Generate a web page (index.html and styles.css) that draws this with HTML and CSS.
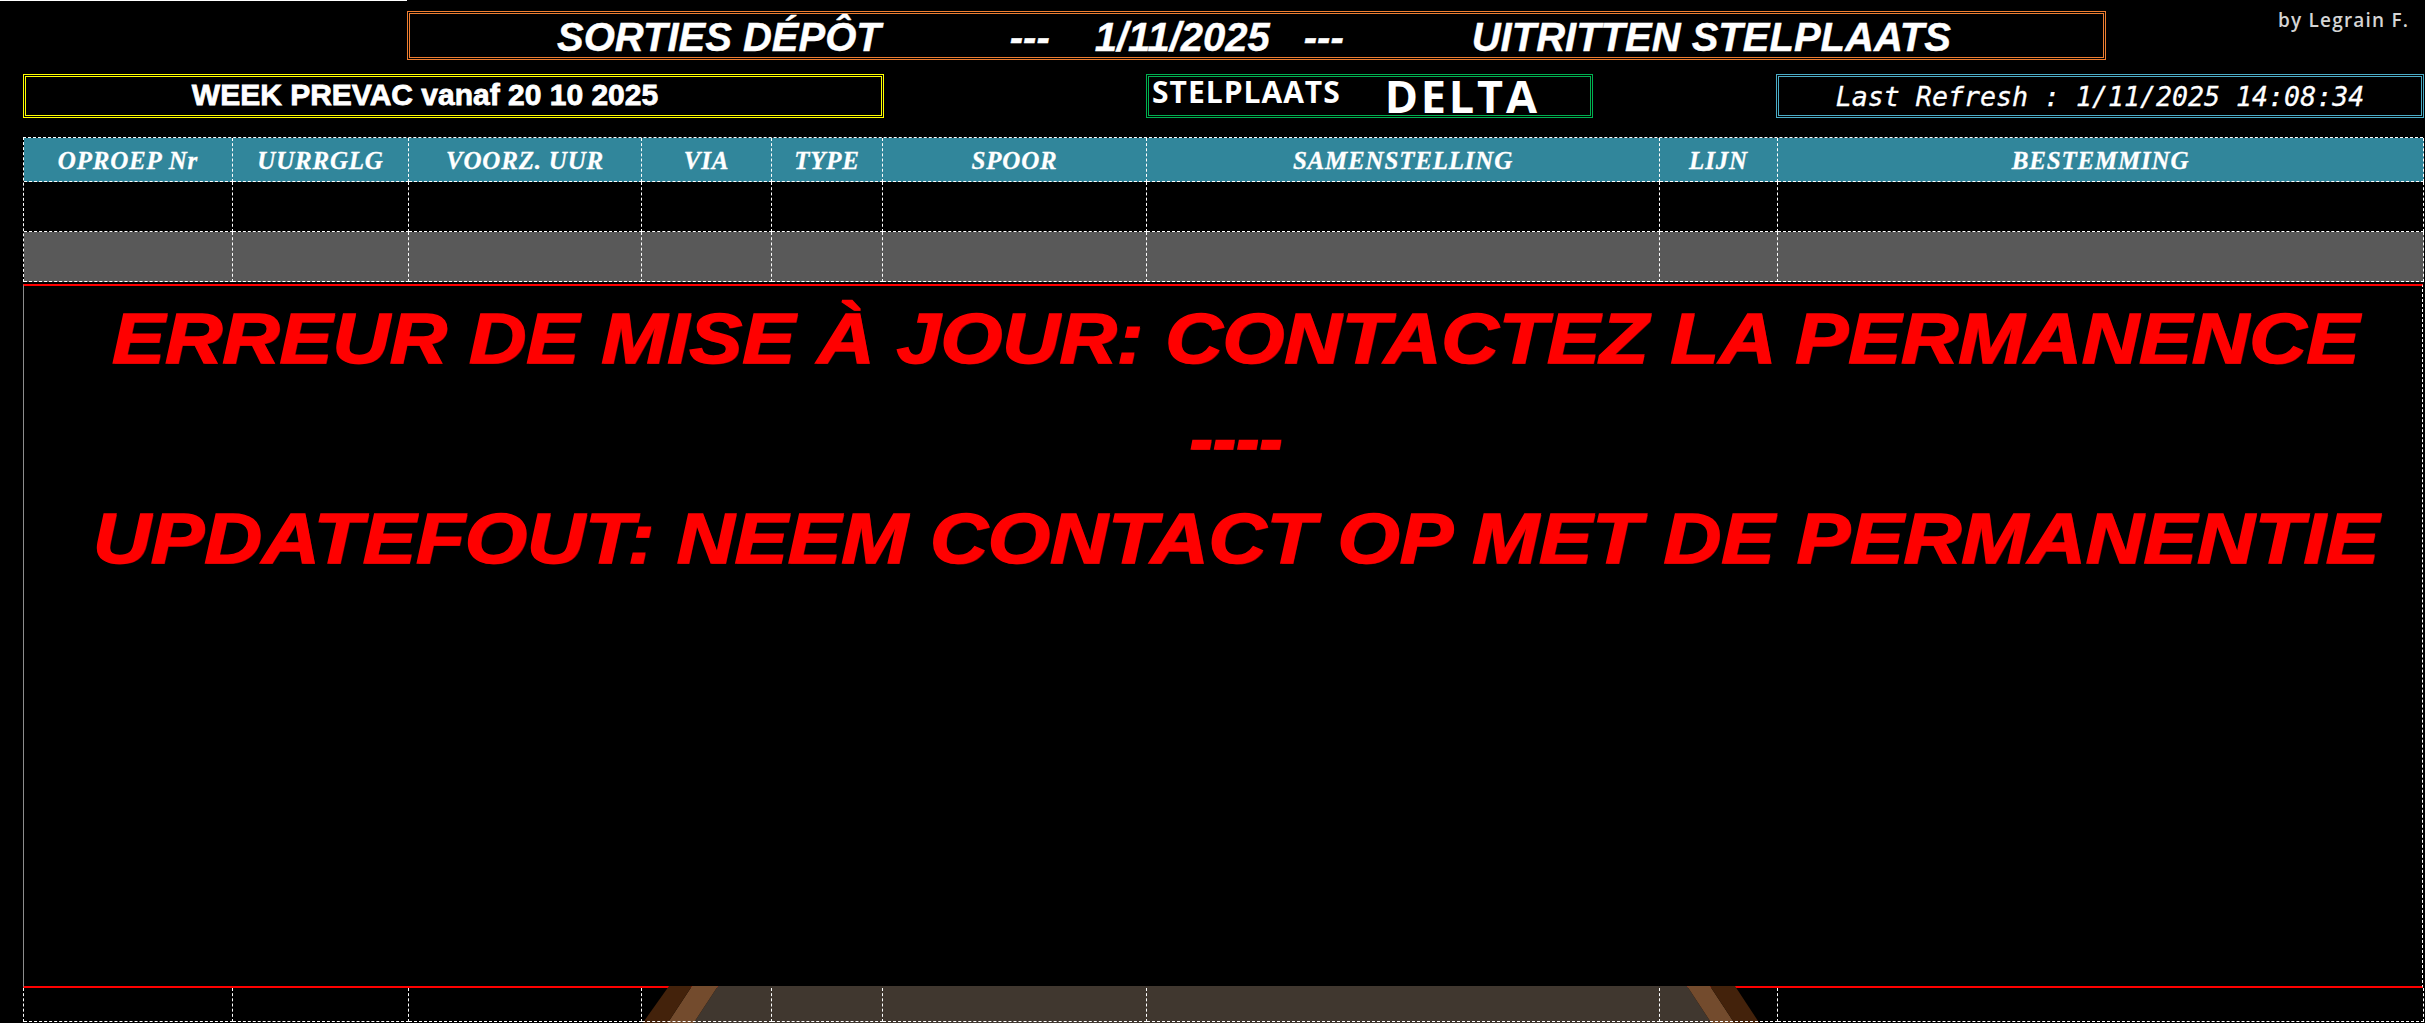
FILE: index.html
```html
<!DOCTYPE html>
<html lang="fr">
<head>
<meta charset="utf-8">
<title>Sorties dépôt</title>
<link rel="stylesheet" href="styles.css">
</head>
<body>
<div class="top">
  <div class="corner"></div>
  <div class="title">
    <span class="t1">SORTIES DÉPÔT</span>
    <span class="t2">---</span>
    <span class="t3">1/11/2025</span>
    <span class="t4">---</span>
    <span class="t5">UITRITTEN STELPLAATS</span>
  </div>
  <div class="credit">by Legrain F.</div>
</div>

<div class="infobar">
  <div class="week">WEEK PREVAC vanaf 20 10 2025</div>
  <div class="stel"><span class="stel-label">STELPLAATS</span><span class="stel-name">DELTA</span></div>
  <div class="refresh">Last Refresh : 1/11/2025 14:08:34</div>
</div>

<div class="sheet">
  <div class="grid">
    <div class="hd">OPROEP Nr</div>
    <div class="hd">UURRGLG</div>
    <div class="hd">VOORZ. UUR</div>
    <div class="hd">VIA</div>
    <div class="hd">TYPE</div>
    <div class="hd">SPOOR</div>
    <div class="hd">SAMENSTELLING</div>
    <div class="hd">LIJN</div>
    <div class="hd">BESTEMMING</div>

    <div class="c r1"></div><div class="c r1"></div><div class="c r1"></div><div class="c r1"></div><div class="c r1"></div><div class="c r1"></div><div class="c r1"></div><div class="c r1"></div><div class="c r1"></div>

    <div class="c r2"></div><div class="c r2"></div><div class="c r2"></div><div class="c r2"></div><div class="c r2"></div><div class="c r2"></div><div class="c r2"></div><div class="c r2"></div><div class="c r2"></div>
  </div>

  <div class="alert">
    <div class="line"><span class="fr">ERREUR DE MISE À JOUR: CONTACTEZ LA PERMANENCE</span></div>
    <div class="line"><span class="sep">----</span></div>
    <div class="line"><span class="nl">UPDATEFOUT: NEEM CONTACT OP MET DE PERMANENTIE</span></div>
  </div>

  <div class="grid bottom">
    <svg class="bench" width="2400" height="40" viewBox="0 0 2400 40" aria-hidden="true">
      <polygon points="694,0 1663,0 1688,38 669,38" fill="#40372f"/>
      <polygon points="668,0 694,0 669,38 643,38" fill="#734b2d"/>
      <polygon points="645,0 668,0 643,38 618,38" fill="#43220b"/>
      <polygon points="1663,0 1686,0 1711,38 1688,38" fill="#734b2d"/>
      <polygon points="1686,0 1711,0 1736,38 1711,38" fill="#43220b"/>
    </svg>
    <div class="c r3"></div><div class="c r3"></div><div class="c r3"></div><div class="c r3"></div><div class="c r3"></div><div class="c r3"></div><div class="c r3"></div><div class="c r3"></div><div class="c r3"></div>
  </div>
</div>
</body>
</html>
```

FILE: styles.css
```css
html, body {
  margin: 0;
  padding: 0;
  background: #000;
}
body {
  width: 2425px;
  height: 1023px;
  overflow: hidden;
  color: #fff;
  font-family: "Liberation Sans", Arial, sans-serif;
}

/* top row */
.top {
  display: flex;
  align-items: flex-start;
  height: 60px;
}
.corner {
  width: 407px;
  height: 0;
  border-top: 1px solid #fff;
}
.title {
  box-sizing: border-box;
  width: 1699px;
  height: 49px;
  margin-top: 11px;
  border: 3px double #ed7d31;
  padding-top: 3px;
  display: flex;
  font-family: "Liberation Sans", Arial, sans-serif;
  font-weight: bold;
  font-style: italic;
  font-size: 40px;
  line-height: 40px;
  white-space: nowrap;
  -webkit-text-stroke: 0.4px #fff;
}
.t1 { margin-left: 147px; }
.t2 { margin-left: 129px; }
.t3 { margin-left: 45px; }
.t4 { margin-left: 34px; }
.t5 { margin-left: 128px; }

.credit {
  margin-left: 172px;
  margin-top: 11px;
  font-family: "Open Sans", sans-serif;
  font-weight: 600;
  font-size: 19px;
  line-height: 19px;
  letter-spacing: 1.2px;
  color: #d4d4d4;
  white-space: nowrap;
}

/* info bar */
.infobar {
  display: flex;
  margin-top: 14px;
  padding-left: 23px;
  height: 44px;
}
.week, .stel, .refresh {
  box-sizing: border-box;
  height: 44px;
  border-width: 3px;
  border-style: double;
}
.week {
  width: 861px;
  border-color: #ffff00;
  text-align: center;
  padding-right: 57px;
  font-family: "Liberation Sans", Arial, sans-serif;
  font-weight: bold;
  font-size: 30px;
  line-height: 36px;
  white-space: nowrap;
  -webkit-text-stroke: 0.8px #fff;
}
.stel {
  width: 447px;
  margin-left: 262px;
  border-color: #00b050;
  display: flex;
  align-items: flex-start;
  padding-left: 3px;
  font-family: "Open Sans", sans-serif;
  white-space: nowrap;
}
.stel-label {
  font-weight: 700;
  font-size: 30px;
  line-height: 30px;
  letter-spacing: 1px;
}
.stel-name {
  margin-left: 44px;
  margin-top: -4px;
  font-weight: 700;
  font-size: 45px;
  line-height: 45px;
  letter-spacing: 2.8px;
}
.refresh {
  width: 648px;
  margin-left: 183px;
  border-color: #4bacc6;
  text-align: center;
  padding-top: 2px;
  font-family: "DejaVu Sans Mono", monospace;
  font-style: italic;
  font-size: 26.6px;
  line-height: 36px;
  white-space: nowrap;
  -webkit-text-stroke: 0.3px #fff;
}

/* sheet */
.sheet {
  margin-top: 19px;
  padding-left: 23px;
}
.grid {
  display: grid;
  grid-template-columns: 209px 176px 233px 130px 111px 264px 513px 118px 646px;
  width: 2400px;
  box-sizing: border-box;
  border-top: 1px dashed #fff;
  border-left: 1px dashed #fff;
}
.grid > div {
  box-sizing: border-box;
  border-right: 1px dashed #fff;
  border-bottom: 1px dashed #fff;
}
.hd {
  height: 44px;
  background: #31869b;
  display: flex;
  align-items: center;
  justify-content: center;
  padding-top: 2px;
  font-family: "Liberation Serif", "Times New Roman", serif;
  font-weight: bold;
  font-style: italic;
  font-size: 25px;
  letter-spacing: 0.8px;
  white-space: nowrap;
  -webkit-text-stroke: 0.3px #fff;
}
.r1 { height: 50px; background: #000; }
.r2 { height: 50px; background: #595959; }

/* overlay message */
.alert {
  box-sizing: border-box;
  width: 2400px;
  height: 704px;
  margin-top: 2px;
  border-top: 2px solid #ff0000;
  border-bottom: 2px solid #ff0000;
  border-left: 1px solid #8c8c8c;
  border-right: 1px dashed #fff;
  background: #000;
  padding-top: 3px;
  padding-left: 26px;
  text-align: center;
  font-family: "Liberation Sans", Arial, sans-serif;
  font-weight: bold;
  font-style: italic;
  font-size: 70px;
  line-height: 100px;
  color: #ff0000;
  -webkit-text-stroke: 1.5px #ff0000;
  text-shadow: 1px 1px 0 #8a0000;
}
.line {
  height: 100px;
  white-space: nowrap;
}
.line span {
  display: inline-block;
}
.fr { transform: scaleX(1.133); }
.sep { transform: scaleX(1.0); }
.nl { transform: scaleX(1.143); }

/* bottom partial row */
.bottom {
  position: relative;
  border-top: 0;
}
.bench {
  position: absolute;
  left: 0;
  top: -2px;
  z-index: 0;
}
.r3 {
  height: 34px;
  background: transparent;
  position: relative;
  z-index: 1;
}
```
